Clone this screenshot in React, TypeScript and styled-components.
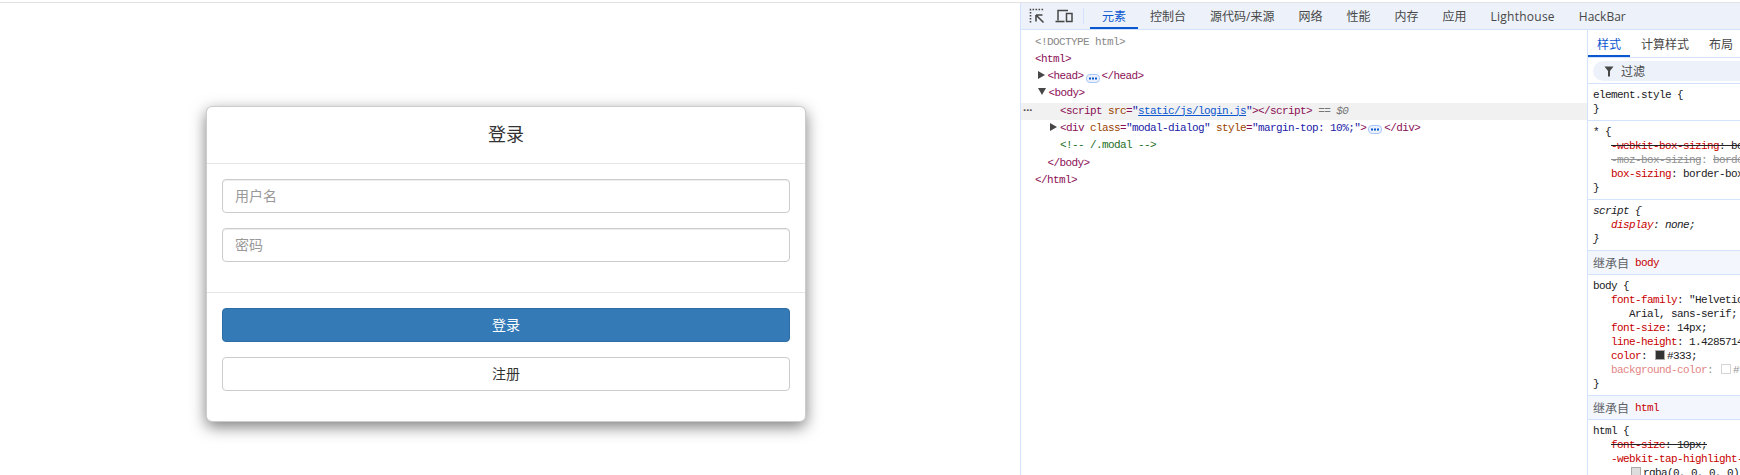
import React from 'react';
import styled, { createGlobalStyle } from 'styled-components';

const MONO = '"Liberation Mono", "Noto Sans CJK SC", monospace';
const UI = '"Open Sans", "Noto Sans CJK SC", sans-serif';
const CJK = '"Liberation Sans", "Noto Sans CJK SC", sans-serif';

const Global = createGlobalStyle`
  html, body { margin: 0; padding: 0; background: #fff; }
  * { box-sizing: border-box; }
`;

const Screen = styled.div`
  width: 1740px;
  height: 475px;
  overflow: hidden;
  padding-top: 2px;
  display: flex;
  flex-direction: column;
`;
const TopRule = styled.div`
  height: 1px;
  background: #e2e2e2;
  flex: none;
`;
const Split = styled.div`
  flex: 1;
  display: flex;
  min-height: 0;
`;

/* left: the page */
const PagePane = styled.div`
  width: 1021px;
  flex: none;
  border-right: 1px solid #d3e3fd;
  padding: 103px 0 0 206px;
  font-family: ${CJK};
  color: #333;
`;
const Modal = styled.div`
  width: 600px;
  background: #fff;
  border: 1px solid rgba(0, 0, 0, 0.2);
  border-radius: 6px;
  box-shadow: 0 5px 15px rgba(0, 0, 0, 0.5);
`;
const ModalHeader = styled.div`
  padding: 15px;
  height: 57px;
  border-bottom: 1px solid #e5e5e5;
  text-align: center;
  font-size: 18px;
  line-height: 26px;
`;
const ModalBody = styled.div`
  padding: 15px 15px 30px;
  display: flex;
  flex-direction: column;
  gap: 15px;
`;
const Field = styled.input`
  display: block;
  width: 100%;
  height: 34px;
  padding: 6px 12px;
  font: 14px ${CJK};
  border: 1px solid #ccc;
  border-radius: 4px;
  box-shadow: inset 0 1px 1px rgba(0, 0, 0, 0.075);
  &::placeholder { color: #999; opacity: 1; }
`;
const ModalFooter = styled.div`
  padding: 15px 15px 30px;
  border-top: 1px solid #e5e5e5;
  display: flex;
  flex-direction: column;
  gap: 15px;
`;
const Button = styled.button<{ $primary?: boolean }>`
  display: block;
  width: 100%;
  height: 34px;
  padding: 0 0 2px;
  font: 14px ${CJK};
  border-radius: 4px;
  border: 1px solid ${(p) => (p.$primary ? '#2e6da4' : '#ccc')};
  background: ${(p) => (p.$primary ? '#337ab7' : '#fff')};
  color: ${(p) => (p.$primary ? '#fff' : '#333')};
`;

/* right: devtools */
const Devtools = styled.div`
  flex: 1;
  min-width: 0;
  display: flex;
  flex-direction: column;
`;
const TabBar = styled.div`
  height: 27px;
  flex: none;
  background: #edf2fa;
  border-bottom: 1px solid #d3e3fd;
  display: flex;
  align-items: stretch;
  padding-left: 4px;
  font: 12px ${UI};
  color: #474747;
`;
const ToolIcon = styled.span`
  display: flex;
  align-items: center;
  justify-content: center;
  width: 24px;
  margin-right: 3px;
`;
const BarDivider = styled.span`
  width: 1px;
  height: 16px;
  align-self: center;
  background: #d3e3fd;
  margin: 0 6px 0 4px;
`;
const Tab = styled.div<{ $active?: boolean; $latin?: boolean }>`
  padding: 0 12px;
  display: flex;
  align-items: center;
  white-space: nowrap;
  letter-spacing: ${(p) => (p.$latin ? '0.25px' : '0')};
  color: ${(p) => (p.$active ? '#0b57d0' : '#474747')};
  box-shadow: ${(p) => (p.$active ? 'inset 0 -2px 0 #0b57d0' : 'none')};
`;
const Panels = styled.div`
  flex: 1;
  min-height: 0;
  display: flex;
`;
const DomPane = styled.div`
  width: 566px;
  flex: none;
  padding-top: 3.5px;
  font: 11px/17.3px ${MONO};
  letter-spacing: -0.6px;
  color: #888;
`;
const DomRow = styled.div<{ $level?: number; $selected?: boolean }>`
  position: relative;
  height: 17.3px;
  white-space: nowrap;
  padding-left: ${(p) => 14 + (p.$level ?? 0) * 12.5}px;
  background: ${(p) => (p.$selected ? '#f1f1f1' : 'transparent')};
`;
const Gutter = styled.span`
  position: absolute;
  left: 2px;
  top: 0;
  font: bold 11px/14px ${UI};
  letter-spacing: 0;
  color: #474747;
`;
const Tag = styled.span`color: #8b0e55;`;
const Attr = styled.span`color: #994500;`;
const Val = styled.span`color: #1a1aa6;`;
const Link = styled.span`color: #0b57d0; text-decoration: underline;`;
const Note = styled.span`color: #236e25;`;
const Dim = styled.span`color: #777; font-style: italic;`;
const Arrow = styled.span<{ $open?: boolean }>`
  display: inline-block;
  width: 0;
  height: 0;
  margin-left: -10px;
  margin-right: 3px;
  vertical-align: ${(p) => (p.$open ? '1px' : '0')};
  ${(p) =>
    p.$open
      ? 'border-left: 4px solid transparent; border-right: 4px solid transparent; border-top: 7px solid #474747;'
      : 'border-top: 4px solid transparent; border-bottom: 4px solid transparent; border-left: 7px solid #474747;'}
`;
const DotsBadge = styled.span`
  display: inline-flex;
  align-items: center;
  justify-content: center;
  width: 14px;
  height: 9px;
  margin: 0 2px;
  vertical-align: -0.5px;
  border: 1px solid #a8c7fa;
  border-radius: 4px;
  background: #edf2fa;
`;

const StylePane = styled.div`
  flex: 1;
  min-width: 0;
  overflow: hidden;
  border-left: 1px solid #d3e3fd;
`;
const SubTabs = styled.div`
  height: 28px;
  display: flex;
  border-bottom: 1px solid #d3e3fd;
  font: 12px ${UI};
  color: #474747;
  white-space: nowrap;
`;
const SubTab = styled.div<{ $active?: boolean }>`
  padding: 0 9px;
  margin-right: 2px;
  display: flex;
  align-items: center;
  color: ${(p) => (p.$active ? '#0b57d0' : '#474747')};
  box-shadow: ${(p) => (p.$active ? 'inset 0 -2px 0 #0b57d0' : 'none')};
`;
const FilterRow = styled.div`
  height: 26px;
  padding: 3px 0 3px 5px;
  border-bottom: 1px solid #d3e3fd;
`;
const FilterPill = styled.div`
  height: 20px;
  border-radius: 10px 0 0 10px;
  background: #edf2fa;
  display: flex;
  align-items: center;
  gap: 7px;
  padding-left: 11px;
  font: 12px ${UI};
  color: #474747;
`;
const Rule = styled.div`
  padding: 4px 0 4px 5px;
  border-bottom: 1px solid #d3e3fd;
  font: 11px/14px ${MONO};
  letter-spacing: -0.6px;
  color: #202124;
  white-space: nowrap;
`;
const Decl = styled.div<{ $level?: number; $faded?: boolean; $italic?: boolean }>`
  padding-left: ${(p) => (p.$level ?? 1) * 18}px;
  opacity: ${(p) => (p.$faded ? 0.5 : 1)};
  font-style: ${(p) => (p.$italic ? 'italic' : 'normal')};
`;
const Prop = styled.span`color: #c80000;`;
const Struck = styled.span`text-decoration: line-through;`;
const Inherit = styled.div`
  height: 24px;
  padding-left: 5px;
  display: flex;
  align-items: center;
  gap: 6px;
  background: #f3f6fc;
  border-bottom: 1px solid #d3e3fd;
  font: 12px ${UI};
  color: #5f6368;
`;
const InheritTag = styled.span`
  font: 11px ${MONO};
  letter-spacing: -0.6px;
  color: #c80000;
`;
const Swatch = styled.span<{ $color: string }>`
  display: inline-block;
  width: 10px;
  height: 10px;
  margin: 0 2px;
  vertical-align: -1px;
  background: ${(p) => p.$color};
  border: 1px solid #aaa;
`;

function InspectIcon() {
  return (
    <svg width="16" height="16" viewBox="0 0 16 16" fill="none">
      <path d="M1.5 14.5v-13h13" stroke="#474747" strokeWidth="1.6" strokeDasharray="1.6 1.4" />
      <path d="M7 7h6.5M7 7v6.5M7 7l7.5 7.5" stroke="#474747" strokeWidth="1.6" />
    </svg>
  );
}

function DeviceIcon() {
  return (
    <svg width="18" height="14" viewBox="0 0 18 14" fill="none">
      <path d="M3 11.5V1.5h10" stroke="#474747" strokeWidth="1.5" />
      <path d="M0.5 12.5h9" stroke="#474747" strokeWidth="1.6" />
      <rect x="11.5" y="4.5" width="5.5" height="8" stroke="#474747" strokeWidth="1.5" />
    </svg>
  );
}

function FunnelIcon() {
  return (
    <svg width="10" height="11" viewBox="0 0 10 11">
      <path d="M0.5 0.5h9L6 5v5.5H4V5z" fill="#474747" />
    </svg>
  );
}

function Dots() {
  return (
    <DotsBadge>
      <svg width="8" height="3" viewBox="0 0 8 3" fill="#0b57d0">
        <rect x="0" y="0.5" width="2" height="2" />
        <rect x="3" y="0.5" width="2" height="2" />
        <rect x="6" y="0.5" width="2" height="2" />
      </svg>
    </DotsBadge>
  );
}

export default function App() {
  return (
    <Screen>
      <Global />
      <TopRule />
      <Split>
        <PagePane>
          <Modal>
            <ModalHeader>登录</ModalHeader>
            <ModalBody>
              <Field placeholder="用户名" />
              <Field placeholder="密码" />
            </ModalBody>
            <ModalFooter>
              <Button $primary>登录</Button>
              <Button>注册</Button>
            </ModalFooter>
          </Modal>
        </PagePane>
        <Devtools>
          <TabBar>
            <ToolIcon><InspectIcon /></ToolIcon>
            <ToolIcon><DeviceIcon /></ToolIcon>
            <BarDivider />
            <Tab $active>元素</Tab>
            <Tab>控制台</Tab>
            <Tab>源代码/来源</Tab>
            <Tab>网络</Tab>
            <Tab>性能</Tab>
            <Tab>内存</Tab>
            <Tab>应用</Tab>
            <Tab $latin>Lighthouse</Tab>
            <Tab>HackBar</Tab>
          </TabBar>
          <Panels>
            <DomPane>
              <DomRow>{'<!DOCTYPE html>'}</DomRow>
              <DomRow><Tag>{'<html>'}</Tag></DomRow>
              <DomRow $level={1}>
                <Arrow /><Tag>{'<head>'}</Tag><Dots /><Tag>{'</head>'}</Tag>
              </DomRow>
              <DomRow $level={1}>
                <Arrow $open /><Tag>{'<body>'}</Tag>
              </DomRow>
              <DomRow $level={2} $selected>
                <Gutter>···</Gutter>
                <Tag>{'<script '}</Tag><Attr>src</Attr><Tag>=</Tag><Val>"</Val><Link>static/js/login.js</Link><Val>"</Val>
                <Tag>{'></script>'}</Tag> <Dim>== $0</Dim>
              </DomRow>
              <DomRow $level={2}>
                <Arrow /><Tag>{'<div '}</Tag><Attr>class</Attr><Tag>=</Tag><Val>"modal-dialog"</Val>{' '}
                <Attr>style</Attr><Tag>=</Tag><Val>"margin-top: 10%;"</Val><Tag>{'>'}</Tag><Dots /><Tag>{'</div>'}</Tag>
              </DomRow>
              <DomRow $level={2}><Note>{'<!-- /.modal -->'}</Note></DomRow>
              <DomRow $level={1}><Tag>{'</body>'}</Tag></DomRow>
              <DomRow><Tag>{'</html>'}</Tag></DomRow>
            </DomPane>
            <StylePane>
              <SubTabs>
                <SubTab $active>样式</SubTab>
                <SubTab>计算样式</SubTab>
                <SubTab>布局</SubTab>
              </SubTabs>
              <FilterRow>
                <FilterPill><FunnelIcon />过滤</FilterPill>
              </FilterRow>
              <Rule>
                <div>element.style {'{'}</div>
                <div>{'}'}</div>
              </Rule>
              <Rule>
                <div>* {'{'}</div>
                <Decl><Struck><Prop>-webkit-box-sizing</Prop>: border-box;</Struck></Decl>
                <Decl $faded><Struck>-moz-box-sizing</Struck>: <Struck>border-box;</Struck></Decl>
                <Decl><Prop>box-sizing</Prop>: border-box;</Decl>
                <div>{'}'}</div>
              </Rule>
              <Rule>
                <div><i>script {'{'}</i></div>
                <Decl $italic><Prop>display</Prop>: none;</Decl>
                <div><i>{'}'}</i></div>
              </Rule>
              <Inherit>继承自<InheritTag>body</InheritTag></Inherit>
              <Rule>
                <div>body {'{'}</div>
                <Decl><Prop>font-family</Prop>: "Helvetica Neue", Helvetica,</Decl>
                <Decl $level={2}>Arial, sans-serif;</Decl>
                <Decl><Prop>font-size</Prop>: 14px;</Decl>
                <Decl><Prop>line-height</Prop>: 1.42857143;</Decl>
                <Decl><Prop>color</Prop>: <Swatch $color="#333" />#333;</Decl>
                <Decl $faded><Prop>background-color</Prop>: <Swatch $color="#fff" />#fff;</Decl>
                <div>{'}'}</div>
              </Rule>
              <Inherit>继承自<InheritTag>html</InheritTag></Inherit>
              <Rule>
                <div>html {'{'}</div>
                <Decl><Struck><Prop>font-size</Prop>: 10px;</Struck></Decl>
                <Decl><Prop>-webkit-tap-highlight-color</Prop>:</Decl>
                <Decl $level={2}><Swatch $color="#ddd" />rgba(0, 0, 0, 0);</Decl>
              </Rule>
            </StylePane>
          </Panels>
        </Devtools>
      </Split>
    </Screen>
  );
}
